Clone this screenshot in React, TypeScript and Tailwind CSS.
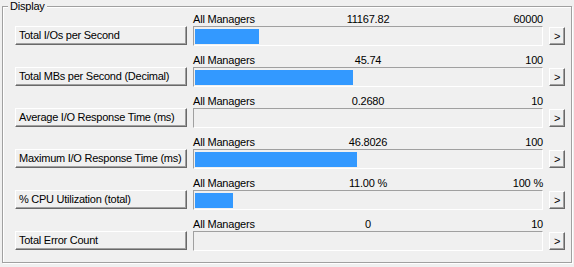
import React from "react";

type Row = { name: string; value: string; max: string; frac: number };

const rows: Row[] = [
  { name: "Total I/Os per Second", value: "11167.82", max: "60000", frac: 11167.82 / 60000 },
  { name: "Total MBs per Second (Decimal)", value: "45.74", max: "100", frac: 0.4574 },
  { name: "Average I/O Response Time (ms)", value: "0.2680", max: "10", frac: 0 },
  { name: "Maximum I/O Response Time (ms)", value: "46.8026", max: "100", frac: 0.468026 },
  { name: "% CPU Utilization (total)", value: "11.00 %", max: "100 %", frac: 0.11 },
  { name: "Total Error Count", value: "0", max: "10", frac: 0 },
];

function MeterRow({ r }: { r: Row }) {
  return (
    <div className="grid grid-cols-[172px_350px_16px] gap-x-[6px] grid-rows-[13px_20px]">
      <div />
      <div className="grid grid-cols-3 text-[11px] leading-[13px] text-black">
        <span className="whitespace-nowrap">All Managers</span>
        <span className="text-center whitespace-nowrap">{r.value}</span>
        <span className="text-right whitespace-nowrap">{r.max}</span>
      </div>
      <div />
      <button className="h-[19px] w-[172px] whitespace-nowrap border border-t-white border-l-white border-b-[#696969] border-r-[#696969] bg-[#f0f0f0] shadow-[inset_-1px_-1px_0_#a0a0a0] pl-[3px] text-left text-[11px] leading-[15px] tracking-[-0.25px] text-black">
        {r.name}
      </button>
      <div className="h-[20px] border border-t-[#a0a0a0] border-l-[#a0a0a0] border-b-white border-r-white bg-[#f0f0f0] pt-[2px] pb-[1px] pl-px pr-px">
        <div className="h-full bg-[#3399ff]" style={{ width: `${r.frac * 100}%` }} />
      </div>
      <button className="mt-px h-[18px] w-[16px] border border-t-white border-l-white border-b-[#696969] border-r-[#696969] bg-[#f0f0f0] shadow-[inset_-1px_-1px_0_#a0a0a0] flex items-center justify-center text-[11px] leading-none text-black">
        &gt;
      </button>
    </div>
  );
}

export default function App() {
  return (
    <div
      className="w-[574px] h-[267px] bg-[#f0f0f0] pt-[6px] pl-[2px] overflow-hidden tracking-[-0.2px]"
      style={{ fontFamily: '"Liberation Sans", Arial, sans-serif' }}
    >
      <div className="relative w-[570px] h-[257px] border border-[#a0a0a0] shadow-[1px_1px_0_#ffffff,inset_1px_1px_0_#ffffff]">
        <span className="absolute -top-[7px] left-[5px] bg-[#f0f0f0] px-[2px] text-[11px] leading-[13px] text-black">
          Display
        </span>
        <div className="flex flex-col gap-[8px] pt-[6px] pl-[12px]">
          {rows.map((r) => (
            <MeterRow key={r.name} r={r} />
          ))}
        </div>
      </div>
    </div>
  );
}
